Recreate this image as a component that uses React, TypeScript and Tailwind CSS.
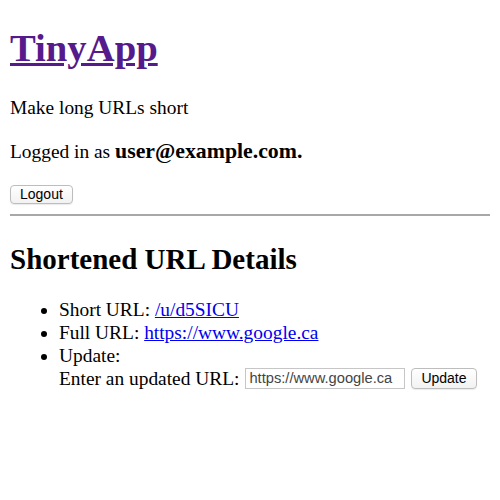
export default function App() {
  return (
    <div className="min-h-[500px] bg-white px-[10px] pt-[26px] text-[19.4px] leading-[22px] text-black font-['Liberation_Serif',serif]">
      <h1 className="text-[38.7px] font-bold leading-[44px]">
        <a href="#" className="text-[#551a8b] underline">
          TinyApp
        </a>
      </h1>
      <p className="mt-[27px]">Make long URLs short</p>
      <p className="mt-[19px] leading-[26px]">
        Logged in as{" "}
        <b className="text-[21.8px] font-bold">user@example.com.</b>
      </p>
      <form className="mt-[20px] flex">
        <button
          type="button"
          className="h-[19px] rounded-[4px] border border-[#bdbdbd] bg-gradient-to-b from-white to-[#f2f2f2] px-[9px] text-[14px] leading-[17px] font-['Liberation_Sans',sans-serif] shadow-[0_1px_1px_rgba(0,0,0,0.08)]"
        >
          Logout
        </button>
      </form>
      <hr className="mt-[10px] border-t-2 border-[#a8a8a8]" />
      <h2 className="mt-[26px] text-[29px] font-bold leading-[34px]">
        Shortened URL Details
      </h2>
      <ul className="mt-[22px] list-disc pl-[49px] leading-[23px]">
        <li>
          Short URL:{" "}
          <a href="#" className="text-[#0000ee] underline">
            /u/d5SICU
          </a>
        </li>
        <li>
          Full URL:{" "}
          <a href="#" className="text-[#0000ee] underline">
            https://www.google.ca
          </a>
        </li>
        <li>
          Update:
          <form className="flex h-[23px] items-center">
            <span>Enter an updated URL:</span>
            <input
              type="text"
              defaultValue="https://www.google.ca"
              className="ml-[6px] h-[21px] w-[160px] border border-[#c6c6c6] px-[3px] text-[14.7px] text-[#444] font-['Liberation_Sans',sans-serif] outline-none"
            />
            <button
              type="button"
              className="ml-[6px] h-[21px] rounded-[4px] border border-[#bdbdbd] bg-gradient-to-b from-white to-[#f2f2f2] px-[9px] text-[14px] leading-[17px] font-['Liberation_Sans',sans-serif] shadow-[0_1px_1px_rgba(0,0,0,0.08)]"
            >
              Update
            </button>
          </form>
        </li>
      </ul>
    </div>
  );
}
